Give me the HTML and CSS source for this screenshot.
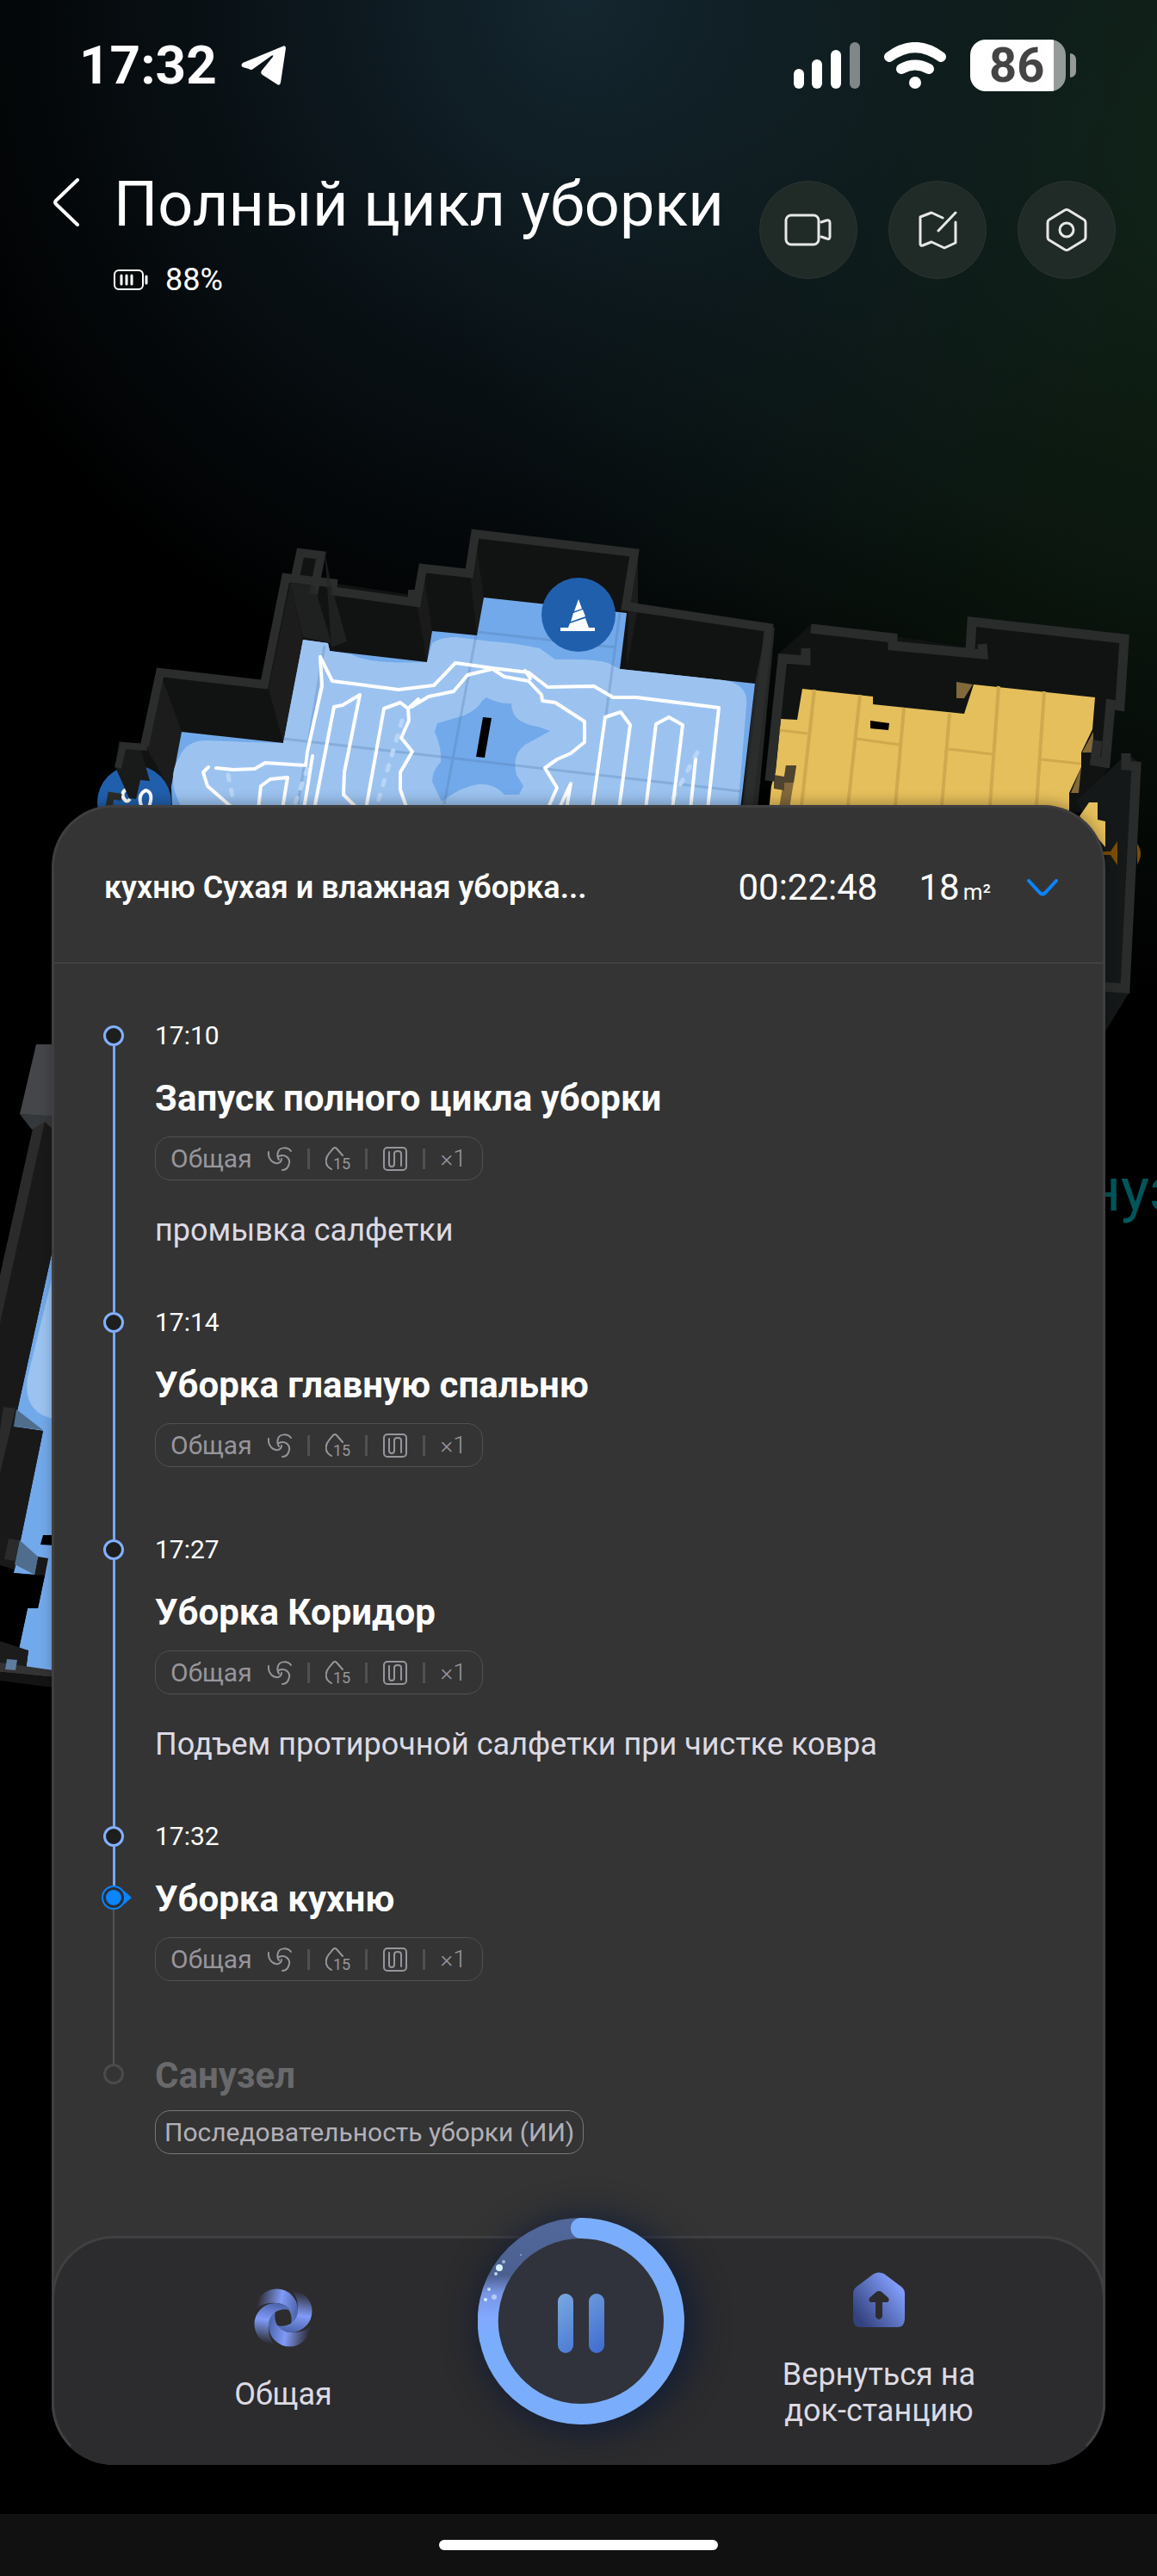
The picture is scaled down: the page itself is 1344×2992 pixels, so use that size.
FILE: index.html
```html
<!DOCTYPE html>
<html lang="ru">
<head>
    <meta charset="UTF-8">
    <meta name="viewport" content="width=device-width, initial-scale=1.0">
    <title>Полный цикл уборки</title>
    <link rel="stylesheet" href="styles.css">
</head>
<body>
    <!-- shared icons -->
    <svg class="sprite" aria-hidden="true">
        <symbol id="fan" viewBox="0 0 28 28">
            <g fill="none" stroke="currentColor" stroke-width="2" stroke-linecap="round">
                <path d="M27 5C23 0 14 0 12 6c-1 3-1 6 1 9"/>
                <path d="M1 6c-1 8 5 14 11 13 3-1 4-2 4-5"/>
                <path d="M13 11c7-3 13 2 12 8-1 5-4 8-8 8"/>
            </g>
        </symbol>
        <symbol id="drop" viewBox="0 0 28 28">
            <path d="M7 26C-2 21 0 13 4 8l5-6q2-2 4 0l7 8" fill="none" stroke="currentColor" stroke-width="2" stroke-linecap="round"/>
        </symbol>
        <symbol id="route" viewBox="0 0 28 28">
            <g fill="none" stroke="currentColor" stroke-width="2">
                <rect x="1" y="1" width="26" height="26" rx="4"/>
                <path d="M7 6v14q0 3 3 3t3-3V8q0-3 4-3t4 3v14" stroke-linecap="round"/>
            </g>
        </symbol>
    </svg>

    <!-- apartment map -->
    <svg class="map" viewBox="0 560 1344 1440" aria-hidden="true">
        <!-- kitchen walls -->
        <path fill="#111212" d="M138 885L142 863 167 863 186 777 307 791 328 668 344 668 349 640 377 643 372 675 472 690 484 690 490 656 544 662 552 616 741 638 732 700 897 725 870 940 160 940Z"/>
        <path fill="#1c1c1c" d="M186 781L211 850 199 920 167 863ZM312 800L329 863 352 743 337 677ZM741 640L730 706 728 776 741 706Z"/>
        <path fill="#1a1a1a" d="M552 624L562 694 554 738 546 668ZM492 664L502 733 496 769 484 700Z"/>
        <path fill="#252626" d="M890 729L900 729 880 940 862 940 877 794Z"/>

        <!-- kitchen floor -->
        <path fill="#72a9ea" d="M211 850L329 863 352 743 381 747 383 756 496 769 502 733 554 738 562 694 728 712 720 777 877 794 860 940 200 940 199 913Z"/>
        <path fill="#9cc3f0" d="M212 940Q192 905 208 880 216 860 240 860L285 862 329 863 352 743 381 747 383 756 408 760Q430 772 496 769L502 747Q512 740 530 740L570 745Q600 747 627 753L645 766Q690 765 706 770L720 777 840 790Q870 794 867 820L857 940Z"/>
        <path fill="#72a9ea" d="M565 810Q580 818 594 817 594 830 604 837 615 843 625 844L639 849 610 865Q594 876 600 900L608 913 603 923 586 923Q573 909 555 911 535 914 513 931L502 908Q502 895 512 885 513 868 505 850L508 840 539 831Q555 824 560 814Z"/>
        <g stroke="#507aab" stroke-opacity=".3" stroke-width="3" fill="none">
            <path d="M329 858L860 919M555 734L716 752M553 738L516 934M720 712L690 934M377 750L346 934"/>
        </g>
        <path d="M561 833l10 1-8 46-10-1z"/>
        <g fill="none" stroke="#b9d5f6" stroke-width="5" stroke-linecap="round" stroke-dasharray="6 12">
            <path d="M467 837L439 932M357 893L343 933M810 874L778 934M265 900l6 30"/>
        </g>
        <g fill="none" stroke="#fff" stroke-width="4" stroke-linejoin="round" stroke-linecap="round">
            <path d="M372 763L386 791 463 801 504 796 529 770 572 776 614 781 636 798 690 797 712 810 739 810 835 822 822 940"/>
            <path d="M372 763L374 797 357 873 355 889 308 886 296 893 271 894 251 892"/>
            <path d="M242 891L236 897 241 913 272 940M300 940L303 913 314 905 334 903 328 940M363 878L353 940"/>
            <path d="M365 940L388 821 398 819 418 807 400 897 399 923 416 940"/>
            <path d="M425 940L446 823 465 816 474 823 475 837 466 857 479 873 465 897 465 917 473 940"/>
            <path d="M474 823L486 812M478 821L498 809 527 803 543 784 572 777 586 786 614 791 629 807 630 814 645 816 679 838 679 862 663 875 647 882 633 892 647 915 636 940"/>
            <path d="M649 940L663 910 658 940M688 940L703 833 721 827 732 842 719 940"/>
            <path d="M750 940L762 841 777 833 793 842 781 940M802 940L808 882M610 779l6 9"/>
        </g>
        <g fill="none" stroke="#2b2c2c" stroke-width="10">
            <path d="M168 866L186 781 307 795 332 671 392 678 M384 686L484 700 491 660 545 666 552 620 737 642 727 704 893 729 869 940"/>
            <path d="M343 670L349 642 373 645 364 690M474 690h12"/>
        </g>
        <path fill="#252626" fill-opacity=".7" d="M337 677L365 680 385 747 352 740ZM377 640L385 680 403 745 385 752Z"/>

        <!-- no-go marker -->
        <circle cx="672" cy="714" r="43" fill="#205fab"/>
        <path fill="#fff" d="M672 696l4 11-9 3zM666 712l11-4 3 8-17 6zM662 724l18-6 4 11h7v4h-40v-4h9z"/>

        <!-- dock marker -->
        <circle cx="156" cy="932" r="43" fill="#205fab"/>
        <path fill="none" stroke="#fff" stroke-width="4" d="M147 917q-6 2-4 9 4 8 8 2M166 940q-8-16 3-22 11 2 3 22"/>
        <path fill="#191a1a" d="M138 861L162 865 174 907 163 906 158 928 150 927 134 891Z"/>
        <path fill="none" stroke="#2b2c2c" stroke-width="8" d="M137 892L143 866 171 868M126 940l3-16 12 2"/>

        <!-- bedroom -->
        <path fill="#101312" d="M896 906L905 759 942 725 1045 740 1127 752 1128 718 1311 739 1305 822 1296 822 1290 888 1255 943 893 943Z"/>
        <path fill="#151818" d="M1310 875L1325 888 1311 1154 1284 1198 1284 990 1250 930Z"/>
        <path fill="#e5bf5b" d="M932 800L1014 809 1014 818 1120 829 1131 795 1272 810 1269 847 1256 874 1256 891 1242 921 1242 943 893 943 896 913 901 896 907 835 926 836ZM1265 932l10 0 0 20 9 2v30l-30-36z"/>
        <g stroke="#cfa94e" stroke-width="4">
            <path d="M946 801L931 936M999 807L985 936M1050 822L1040 936M1103 829L1094 936M1160 797L1150 936M1213 803L1204 936" fill="none"/>
            <path d="M995 858L1045 865M1102 870L1153 876M1209 882L1256 887M905 848L938 852" stroke-width="3" fill="none"/>
        </g>
        <path d="M1011 837l22 3-1 8-21-2z"/>
        <path fill="#82693a" d="M913 889h12l-8 50h-12zM1111 792l19 3-10 16h-9zM1270 850v24h-13zM1256 891l-3 30h-9z"/>
        <path fill="#4d432f" d="M913 889h12l-3 20h-12zM899 900l12 2v16l-12-2z"/>
        <g fill="none" stroke="#2a2c2c" stroke-width="11">
            <path d="M894 907L909 765 936 767 936 753M942 730L1037 741 1037 750 1142 760 1141 748M1127 756L1129 722 1306 742 1301 820 1290 818 1284 886 1272 884 1275 860"/>
            <path d="M1308 875v14L1320 890 1307 1148 1280 1146"/>
        </g>
        <path fill="#7a4c00" d="M1280 989h10l8-12v28l-8-12h-10zM1321 980q8 11 0 24z"/>
        <text x="1178" y="1406" font-size="70" fill="#00565a">Санузел</text>

        <!-- living room -->
        <path fill="#72a9ea" d="M60 1456L16 1657 50 1662 16 1827 52 1830 44 1868 32 1868 22 1915 33 1917 30 1940 60 1942H66V1440Z"/>
        <path fill="#9cc3f0" d="M62 1478L32 1600Q26 1640 62 1648Z"/>
        <path fill="#191919" d="M46 1300L60 1302V1456L16 1657 50 1662 17 1823 0 1818V1486ZM44 1808l12 2-4 21-12-2z"/>
        <path fill="#2b2b2b" d="M40 1302L52 1303 0 1537V1481ZM4 1634l14 2-18 75v-50zM10 1787l13 2-6 24-12-2z"/>
        <path fill="#4f6e8e" d="M19 1637L50 1661 16 1657ZM23 1789L44 1808 40 1829 17 1817Z"/>
        <path fill="#444649" d="M42 1213h20v84l-39-3z"/>
        <path fill="#35383b" d="M23 1294l39 2v16l-10-9-15 9z"/>
        <path d="M50 1783h14v12l-17-1zM0 1826l52 4-8 38H32l-10 47-22-10z"/>
        <path fill="#1c1c1c" d="M0 1906L33 1917 30 1940 0 1936Z"/>
        <path fill="#333" d="M0 1931L62 1940V1948L0 1942Z"/>
        <path fill="#5d7c9f" d="M8 1927l12 1-2 12-12-1z"/>
        <path fill="#141414" d="M0 1942L62 1948V1960L0 1952Z"/>
    </svg>

    <div class="status-bar">
        <div class="status-left">
            <span class="clock">17:32</span>
            <svg width="52" height="46" viewBox="0 0 52 46" aria-hidden="true">
                <path fill="#fff" d="M48 1q4-2 4 2l-6 40q-1 4-4 2L25 34q-3-2-1-5l13-16q1-3-2-1L14 27q-2 2-5 0l-7-2q-3-2 0-5z"/>
            </svg>
        </div>
        <div class="status-right">
            <svg width="77" height="54" viewBox="0 0 77 54" aria-hidden="true">
                <g fill="#fff">
                    <rect y="31" width="12" height="23" rx="6"/>
                    <rect x="21" y="20" width="12" height="34" rx="6"/>
                    <rect x="43" y="9" width="12" height="45" rx="6"/>
                    <rect x="65" width="12" height="54" rx="6" opacity=".47"/>
                </g>
            </svg>
            <svg width="72" height="54" viewBox="0 0 72 54" aria-hidden="true">
                <g fill="none" stroke="#fff" stroke-width="12" stroke-linecap="round">
                    <path d="M6 17Q36-5 66 17"/>
                    <path d="M20 31Q36 22 52 31"/>
                </g>
                <circle cx="36" cy="47" r="7" fill="#fff"/>
            </svg>
            <div class="battery"><span>86</span></div>
        </div>
    </div>

    <header class="top">
        <button class="back" aria-label="Назад">
            <svg width="30" height="56" viewBox="0 0 30 56"><path d="M28 2L3 26q-2 2 0 4l25 24" fill="none" stroke="#fff" stroke-width="4" stroke-linecap="round"/></svg>
        </button>
        <div class="device">
            <h1>Полный цикл уборки</h1>
            <p class="charge">
                <svg width="40" height="24" viewBox="0 0 40 24" aria-hidden="true">
                    <rect x="1" y="1" width="33" height="22" rx="5" fill="none" stroke="#fff" stroke-width="2"/>
                    <path d="M9 7v10M15 7v10M21 7v10M38 8v8" stroke="#fff" stroke-width="3" stroke-linecap="round"/>
                </svg>
                88%
            </p>
        </div>
        <nav class="tools">
            <button class="round-btn" aria-label="Камера">
                <svg width="56" height="56" viewBox="0 0 56 56"><g fill="none" stroke="#e6e8e7" stroke-width="3" stroke-linejoin="round" stroke-linecap="round"><rect x="2" y="11" width="38" height="34" rx="6"/><path d="M43 19l6-2q4-1 4 3v16q0 4-4 2l-6-2"/></g></svg>
            </button>
            <button class="round-btn" aria-label="Карта">
                <svg width="56" height="56" viewBox="0 0 56 56"><g fill="none" stroke="#e6e8e7" stroke-width="3" stroke-linejoin="round" stroke-linecap="round"><path d="M34 14L21 8 8 13v31q0 3 3 2l10-4 15 7 13-6V19M49 8L29 29"/></g></svg>
            </button>
            <button class="round-btn" aria-label="Настройки">
                <svg width="56" height="56" viewBox="0 0 56 56"><g fill="none" stroke="#e6e8e7" stroke-width="3" stroke-linejoin="round"><path d="M26 5q2-1 4 0l18 11q2 1 2 4v16q0 3-2 4L30 51q-2 1-4 0L8 40q-2-1-2-4V20q0-3 2-4z"/><circle cx="28" cy="28" r="8"/></g></svg>
            </button>
        </nav>
    </header>

    <main class="sheet">
        <div class="summary">
            <h2 class="summary-title">кухню Сухая и влажная уборка...</h2>
            <span class="timer">00:22:48</span>
            <span class="area">18<small>m²</small></span>
            <button class="collapse" aria-label="Свернуть">
                <svg width="36" height="20" viewBox="0 0 36 20"><path d="M2 2l13 14q3 3 6 0L34 2" fill="none" stroke="#0a84ff" stroke-width="4" stroke-linecap="round"/></svg>
            </button>
        </div>

        <ol class="timeline">
            <li class="step">
                <div class="rail"><span class="dot"></span><span class="line"></span></div>
                <div class="step-body">
                    <time>17:10</time>
                    <h3>Запуск полного цикла уборки</h3>
                    <div class="tags">
                        <span>Общая</span>
                        <svg class="icon"><use href="#fan"/></svg><i></i>
                        <svg class="icon"><use href="#drop"/><text x="9" y="26">15</text></svg><i></i>
                        <svg class="icon"><use href="#route"/></svg><i></i>
                        <span class="times">×1</span>
                    </div>
                    <p class="note">промывка салфетки</p>
                </div>
            </li>
            <li class="step">
                <div class="rail"><span class="dot"></span><span class="line"></span></div>
                <div class="step-body">
                    <time>17:14</time>
                    <h3>Уборка главную спальню</h3>
                    <div class="tags">
                        <span>Общая</span>
                        <svg class="icon"><use href="#fan"/></svg><i></i>
                        <svg class="icon"><use href="#drop"/><text x="9" y="26">15</text></svg><i></i>
                        <svg class="icon"><use href="#route"/></svg><i></i>
                        <span class="times">×1</span>
                    </div>
                </div>
            </li>
            <li class="step">
                <div class="rail"><span class="dot"></span><span class="line"></span></div>
                <div class="step-body">
                    <time>17:27</time>
                    <h3>Уборка Коридор</h3>
                    <div class="tags">
                        <span>Общая</span>
                        <svg class="icon"><use href="#fan"/></svg><i></i>
                        <svg class="icon"><use href="#drop"/><text x="9" y="26">15</text></svg><i></i>
                        <svg class="icon"><use href="#route"/></svg><i></i>
                        <span class="times">×1</span>
                    </div>
                    <p class="note">Подъем протирочной салфетки при чистке ковра</p>
                </div>
            </li>
            <li class="step current">
                <div class="rail">
                    <span class="dot"></span><span class="line short"></span>
                    <svg class="pointer" width="36" height="28" viewBox="0 0 36 28" aria-hidden="true">
                        <path fill="#0a84ff" d="M26 6l9 8-9 8z"/>
                        <circle cx="14" cy="14" r="13" fill="#2b2e33" stroke="#0a84ff" stroke-width="2"/>
                        <circle cx="14" cy="14" r="9" fill="#0a84ff"/>
                    </svg>
                    <span class="line pending"></span>
                </div>
                <div class="step-body">
                    <time>17:32</time>
                    <h3>Уборка кухню</h3>
                    <div class="tags">
                        <span>Общая</span>
                        <svg class="icon"><use href="#fan"/></svg><i></i>
                        <svg class="icon"><use href="#drop"/><text x="9" y="26">15</text></svg><i></i>
                        <svg class="icon"><use href="#route"/></svg><i></i>
                        <span class="times">×1</span>
                    </div>
                </div>
            </li>
            <li class="step next">
                <div class="rail"><span class="dot"></span></div>
                <div class="step-body">
                    <h3>Санузел</h3>
                    <div class="tags order">Последовательность уборки (ИИ)</div>
                </div>
            </li>
        </ol>

        <div class="actions">
            <button class="action">
                <svg width="68" height="68" viewBox="0 0 68 68" aria-hidden="true">
                    <defs>
                        <linearGradient id="blade" gradientUnits="userSpaceOnUse" x1="2" y1="28" x2="50" y2="36">
                            <stop offset="0" stop-color="#2c2c32"/>
                            <stop offset=".55" stop-color="#809bf8"/>
                            <stop offset="1" stop-color="#4a61a6"/>
                        </linearGradient>
                        <path id="leaf" fill="url(#blade)" d="M2 25A24 24 0 0 1 51 25C51 34 47 40 43 42 46 30 40 18 26 17 14 16 6 20 2 25z"/>
                    </defs>
                    <use href="#leaf"/>
                    <use href="#leaf" transform="rotate(90 34 34)"/>
                    <use href="#leaf" transform="rotate(180 34 34)"/>
                    <use href="#leaf" transform="rotate(270 34 34)"/>
                </svg>
                Общая
            </button>
            <button class="pause" aria-label="Пауза">
                <svg width="240" height="240" viewBox="0 0 240 240">
                    <defs>
                        <linearGradient id="tail" x1="0" y1="1" x2="0" y2="0">
                            <stop offset="0" stop-color="#7aaefc"/>
                            <stop offset=".2" stop-color="#82a8ff"/>
                            <stop offset=".42" stop-color="#7896e4"/>
                            <stop offset=".58" stop-color="#4b608f"/>
                            <stop offset="1" stop-color="#51679a"/>
                        </linearGradient>
                        <linearGradient id="bar" gradientUnits="userSpaceOnUse" x1="93" y1="88" x2="147" y2="157">
                            <stop offset="0" stop-color="#7aa9e0"/>
                            <stop offset="1" stop-color="#3d6bd0"/>
                        </linearGradient>
                    </defs>
                    <circle cx="120" cy="120" r="108" fill="#30333b"/>
                    <path d="M14 142A108 108 0 0 1 120 12" fill="none" stroke="url(#tail)" stroke-width="24"/>
                    <path d="M120 12A108 108 0 1 1 14 141" fill="none" stroke="#7aaefc" stroke-width="24"/>
                    <circle cx="120" cy="12" r="12" fill="#7aaefc"/>
                    <g fill="#d8efff">
                        <circle cx="25" cy="58" r="4"/>
                        <circle cx="30" cy="51" r="2" opacity=".6"/>
                        <circle cx="21" cy="65" r="2" opacity=".8"/>
                        <circle cx="13" cy="83" r="2" opacity=".8"/>
                        <circle cx="19" cy="92" r="3" opacity=".6"/>
                        <circle cx="9" cy="95" r="2"/>
                        <circle cx="50" cy="43" r="1" opacity=".5"/>
                    </g>
                    <rect x="93" y="88" width="18" height="69" rx="9" fill="url(#bar)"/>
                    <rect x="129" y="88" width="18" height="69" rx="9" fill="url(#bar)"/>
                </svg>
            </button>
            <button class="action">
                <svg width="62" height="64" viewBox="0 0 62 64" aria-hidden="true">
                    <defs>
                        <linearGradient id="home" x1=".15" y1=".9" x2=".9" y2=".3">
                            <stop offset="0" stop-color="#34437f"/>
                            <stop offset="1" stop-color="#809bf8"/>
                        </linearGradient>
                    </defs>
                    <path fill="url(#home)" d="M25 2q6-3 12 0l20 15q4 3 4 8v29q0 10-9 10H10Q1 64 1 54V25q0-5 4-8z"/>
                    <path fill="#2c2c2e" d="M28 23q3-2 6 0l8 7q2 5-3 5h-4v17q-4 6-8 0V35h-4q-5 0-3-5z"/>
                </svg>
                Вернуться на<br>док-станцию
            </button>
        </div>
    </main>

    <div class="nav-bar"><span></span></div>
</body>
</html>
```

FILE: styles.css
```css
* {
    box-sizing: border-box;
    margin: 0;
    padding: 0;
}

body {
    position: relative;
    display: flex;
    flex-direction: column;
    min-height: 100vh;
    overflow-x: hidden;
    font-family: Roboto, "Noto Sans", sans-serif;
    color: #fff;
    background:
        radial-gradient(ellipse 60% 820px at 50% 0, #14262f, rgba(16, 30, 38, 0.6) 50%, transparent),
        radial-gradient(ellipse 66% 1000px at 104% 160px, #112416, rgba(15, 31, 20, 0.75) 50%, transparent),
        #000;
}

button {
    border: none;
    background: none;
    color: inherit;
    font: inherit;
    cursor: pointer;
}

svg {
    display: block;
    flex: none;
}

.sprite {
    position: absolute;
    width: 0;
    height: 0;
}

/* map lies under the header and the sheet */
.map {
    position: absolute;
    top: 560px;
    left: 0;
    width: 100%;
    z-index: -1;
}

.status-bar {
    display: flex;
    justify-content: space-between;
    align-items: center;
    height: 152px;
    padding: 0 94px 0 92px;
}

.status-left,
.status-right {
    display: flex;
    align-items: center;
    gap: 28px;
}

.clock {
    font-size: 62px;
    font-weight: 700;
    line-height: 72px;
}

.battery {
    display: flex;
    align-items: center;
    gap: 5px;
}

.battery span {
    width: 111px;
    padding-left: 22px;
    border-radius: 18px;
    background: linear-gradient(to right, #fff 97px, #949b98 97px);
    font-size: 56px;
    font-weight: 700;
    line-height: 60px;
    color: #444;
}

.battery::after {
    content: "";
    width: 7px;
    height: 28px;
    border-radius: 0 7px 7px 0;
    background: #949b98;
}

.top {
    display: flex;
    align-items: flex-start;
    padding: 44px 48px 0 60px;
}

.back {
    width: 72px;
    height: 78px;
    padding-left: 2px;
}

.device {
    flex: 1;
}

.device h1 {
    font-size: 72px;
    font-weight: 400;
    line-height: 84px;
    white-space: nowrap;
}

.charge {
    display: flex;
    align-items: center;
    gap: 20px;
    margin-top: 24px;
    font-size: 36px;
    line-height: 42px;
}

.tools {
    display: flex;
    gap: 36px;
    margin-top: 14px;
}

.round-btn {
    display: flex;
    justify-content: center;
    align-items: center;
    width: 114px;
    height: 114px;
    border: 1px solid #2a3431;
    border-radius: 50%;
    background: #202a27;
}

.sheet {
    margin: auto 60px 57px;
    border: 3px solid #3f3f3f;
    border-bottom: none;
    border-radius: 72px;
    background: #343434;
    box-shadow: 0 -4px 14px rgba(0, 0, 0, 0.25);
}

.summary {
    display: flex;
    align-items: center;
    padding: 64px 52px 58px 58px;
    border-bottom: 1px solid #4c4c4c;
    line-height: 58px;
}

.summary-title {
    flex: 1;
    font-size: 36px;
    font-weight: 600;
}

.timer {
    font-size: 42px;
    margin-right: 48px;
}

.area {
    display: flex;
    align-items: baseline;
    height: 58px;
    font-size: 42px;
    margin-right: 42px;
}

.area small {
    margin-left: 4px;
    font-size: 26px;
    line-height: 30px;
}

.timeline {
    padding: 66px 57px 95px;
    list-style: none;
}

.step {
    display: grid;
    grid-template-columns: 24px 1fr;
    gap: 36px;
}

.rail {
    display: flex;
    flex-direction: column;
    align-items: center;
    padding-top: 6px;
}

.dot {
    width: 24px;
    height: 24px;
    border: 3px solid #82b0ff;
    border-radius: 50%;
    background: #1e1e1e;
}

.line {
    flex: 1;
    width: 3px;
    margin-bottom: -6px;
    background: #79a6fa;
}

.line.short {
    flex: none;
    height: 45px;
    margin-bottom: 0;
}

.line.pending {
    width: 2px;
    margin-bottom: -18px;
    background: #545455;
}

/* circle is centred on the rail, the arrow hangs out to the right */
.pointer {
    margin-right: -8px;
}

.step-body {
    padding-bottom: 67px;
}

.step time {
    display: block;
    font-size: 30px;
    line-height: 36px;
}

.step h3 {
    margin-top: 30px;
    font-size: 42px;
    font-weight: 700;
    line-height: 50px;
}

.tags {
    display: flex;
    align-items: center;
    gap: 18px;
    width: fit-content;
    height: 51px;
    margin-top: 19px;
    padding: 0 18px 0 17px;
    border: 1px solid #515153;
    border-radius: 18px;
    font-size: 30px;
    color: #97959c;
}

.tags:last-child {
    margin-bottom: 11px;
}

.tags i {
    width: 3px;
    height: 24px;
    background: #505052;
}

.icon {
    width: 28px;
    height: 28px;
    overflow: visible;
}

.icon text {
    font-size: 18px;
    fill: currentColor;
}

.times {
    font-size: 28px;
    font-weight: 300;
}

.note {
    margin-top: 36px;
    font-size: 36px;
    line-height: 44px;
    color: #dcdae3;
}

.next .rail {
    padding-top: 18px;
}

.next .dot {
    border-color: #4b4b4c;
    background: none;
}

.next .step-body {
    padding-bottom: 0;
}

.next h3 {
    margin-top: 7px;
    color: #69696b;
}

.next .tags {
    margin: 15px 0 0;
    padding: 0 10px;
    border-color: #77777b;
    color: #b2b0b8;
}

.actions {
    display: grid;
    grid-template-columns: 1fr 240px 1fr;
    margin: 0 -3px;
    padding: 0 34px 0 40px;
    border: 3px solid #404042;
    border-bottom-color: #2c2c2e;
    border-radius: 72px;
    background: #2c2c2e;
}

.action {
    display: flex;
    flex-direction: column;
    justify-content: center;
    align-items: center;
    gap: 34px;
    font-size: 36px;
    line-height: 42px;
    color: #dcdae3;
}

.pause {
    height: 240px;
    margin: -24px 0 44px;
    border-radius: 50%;
    box-shadow: 6px 4px 36px 8px rgba(12, 24, 52, 0.7);
}

.nav-bar {
    display: flex;
    justify-content: center;
    align-items: center;
    height: 72px;
    background: #111;
}

.nav-bar span {
    width: 324px;
    height: 12px;
    border-radius: 6px;
    background: #fff;
}
```
